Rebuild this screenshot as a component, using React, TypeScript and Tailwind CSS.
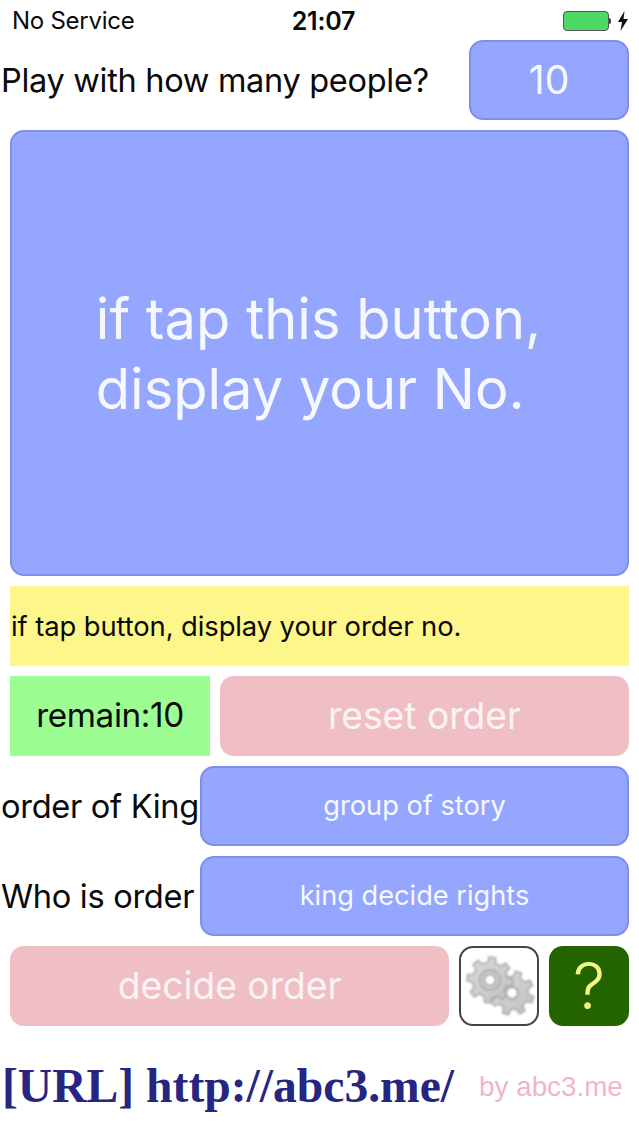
const font = "font-['Inter','Noto_Sans',sans-serif]";

function gearPath(cx: number, cy: number, outer: number, inner: number, teeth: number, rot = 0) {
  const pts: string[] = [];
  const step = (Math.PI * 2) / teeth;
  for (let i = 0; i < teeth; i++) {
    const a = i * step + rot;
    const list: [number, number][] = [
      [a - step * 0.5, inner],
      [a - step * 0.3, inner],
      [a - step * 0.18, outer],
      [a + step * 0.18, outer],
      [a + step * 0.3, inner],
    ];
    for (const [t, r] of list) {
      pts.push(`${(cx + Math.cos(t) * r).toFixed(2)} ${(cy + Math.sin(t) * r).toFixed(2)}`);
    }
  }
  return `M${pts.join("L")}Z`;
}

function Gears() {
  return (
    <svg width="72" height="64" viewBox="0 0 72 64" className="blur-[0.8px]">
      <defs>
        <linearGradient id="gearFill" x1="0" y1="0" x2="1" y2="1">
          <stop offset="0" stopColor="#dcdcdc" />
          <stop offset="1" stopColor="#c0c0c0" />
        </linearGradient>
      </defs>
      <path d={gearPath(49, 39, 22, 16.5, 8, 0.3)} fill="url(#gearFill)" stroke="#aaaaaa" strokeWidth="1.5" />
      <circle cx="49" cy="39" r="6" fill="#fff" stroke="#a5a5a5" strokeWidth="2" />
      <path d={gearPath(27, 26, 23, 17.5, 8, 0.1)} fill="url(#gearFill)" stroke="#a8a8a8" strokeWidth="1.5" />
      <circle cx="27" cy="26" r="10" fill="#cfcfcf" stroke="#b0b0b0" strokeWidth="2" />
      <circle cx="27" cy="26" r="5.5" fill="#fff" stroke="#9f9f9f" strokeWidth="1.5" />
    </svg>
  );
}

function BlueButton({ className, children }: { className: string; children: React.ReactNode }) {
  return (
    <div className={`flex items-center justify-center rounded-[14px] border-2 border-[#7d8fea] bg-[#95a6ff] text-[#f6f8ff] ${className}`}>
      {children}
    </div>
  );
}

function PinkButton({ className, children }: { className: string; children: React.ReactNode }) {
  return (
    <div className={`flex h-20 items-center justify-center rounded-[14px] bg-[#f0bfc5] text-[37.2px] text-[#fbf3f4] ${className}`}>
      {children}
    </div>
  );
}

export default function App() {
  return (
    <div className={`flex h-[1136px] w-[639px] flex-col overflow-hidden bg-white text-[#0a0a0a] ${font}`}>
      <div className="flex h-10 items-center justify-between pl-3 pr-2.5 pt-0.5 leading-none">
        <span className="w-[200px] text-[24px] tracking-[-0.25px]">No Service</span>
        <span className="ml-[6px] text-[25px] font-semibold tracking-[-0.2px]">21:07</span>
        <div className="flex w-[200px] items-center justify-end gap-[6px]">
          <div className="flex items-center">
            <div className="h-[20px] w-[46px] rounded-[4px] border border-[#555] bg-[#4cd964] p-px" />
            <div className="h-[6px] w-[2px] rounded-r-sm bg-[#444]" />
          </div>
          <svg width="12" height="20" viewBox="0 0 12 20">
            <path d="M7.5 0 L1 11 H5 L3.5 20 L11 8 H6.5 Z" fill="#111" />
          </svg>
        </div>
      </div>

      <div className="flex flex-col gap-2.5 px-2.5">
        <div className="-ml-2.5 flex h-20 items-center justify-between">
          <span className="pl-px pt-[3px] text-[32.5px] tracking-[-0.3px]">Play with how many people?</span>
          <BlueButton className="h-20 w-[160px] text-[39px]">10</BlueButton>
        </div>

        <BlueButton className="h-[446px] w-full text-[56px] leading-[70px]">
          <span className="mr-[2px] mt-[2px] whitespace-nowrap">
            if tap this button,
            <br />
            display your No.
          </span>
        </BlueButton>

        <div className="flex h-20 items-center bg-[#fdf68a] pl-px pt-[2px] text-[27.4px] tracking-[-0.1px]">
          if tap button, display your order no.
        </div>

        <div className="flex gap-2.5">
          <div className="flex h-20 w-[200px] items-center justify-center bg-[#9cfd92] text-[33.3px] tracking-[-0.4px]">
            remain:10
          </div>
          <PinkButton className="flex-1">reset order</PinkButton>
        </div>

        <div className="-ml-2.5 flex h-20 items-center">
          <span className="w-[200px] whitespace-nowrap pl-px text-[32.6px] tracking-[-0.3px]">order of King</span>
          <BlueButton className="h-20 flex-1 text-[27.2px]">group of story</BlueButton>
        </div>

        <div className="-ml-2.5 flex h-20 items-center">
          <span className="w-[200px] whitespace-nowrap pl-px text-[32.6px] tracking-[-0.3px]">Who is order</span>
          <BlueButton className="h-20 flex-1 text-[27.2px]">king decide rights</BlueButton>
        </div>

        <div className="flex gap-2.5">
          <PinkButton className="w-[440px]">decide order</PinkButton>
          <div className="flex h-20 w-20 items-center justify-center rounded-[14px] border-2 border-[#444] bg-white">
            <Gears />
          </div>
          <div className="flex h-20 w-20 items-center justify-center rounded-[14px] bg-[#236300] text-[64px] font-light text-[#f4f784]">
            ?
          </div>
        </div>
      </div>

      <div className="mt-[37px] flex items-center pl-[2px]">
        <span className="whitespace-nowrap font-['Liberation_Serif',serif] text-[47.6px] font-bold leading-none text-[#262682]">
          [URL] http://abc3.me/
        </span>
        <span className="ml-[25px] whitespace-nowrap font-['Liberation_Sans',sans-serif] text-[27.8px] leading-none text-[#f0b4cf]">
          by abc3.me
        </span>
      </div>
    </div>
  );
}
